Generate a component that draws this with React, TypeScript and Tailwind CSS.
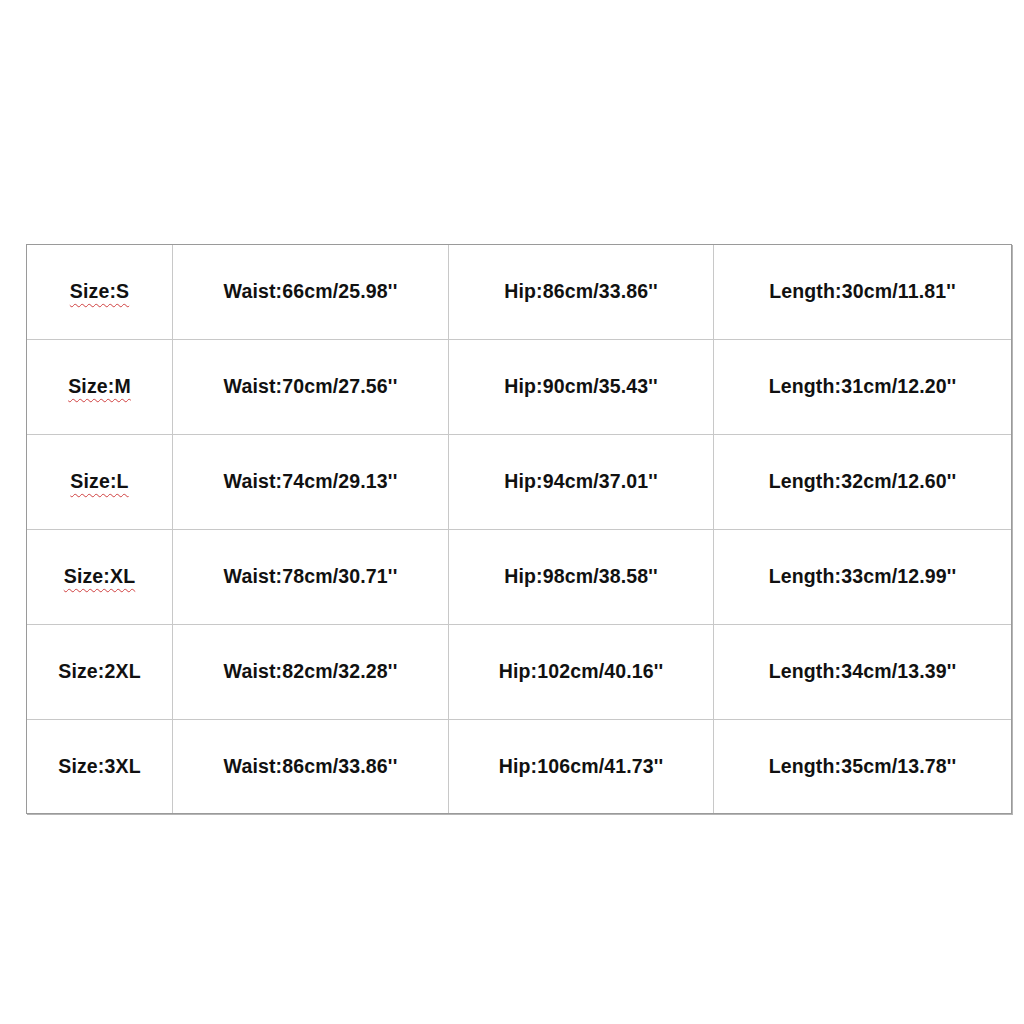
import React from "react";

const rows: [string, string, string, string, boolean][] = [
  ["Size:S", "Waist:66cm/25.98''", "Hip:86cm/33.86''", "Length:30cm/11.81''", true],
  ["Size:M", "Waist:70cm/27.56''", "Hip:90cm/35.43''", "Length:31cm/12.20''", true],
  ["Size:L", "Waist:74cm/29.13''", "Hip:94cm/37.01''", "Length:32cm/12.60''", true],
  ["Size:XL", "Waist:78cm/30.71''", "Hip:98cm/38.58''", "Length:33cm/12.99''", true],
  ["Size:2XL", "Waist:82cm/32.28''", "Hip:102cm/40.16''", "Length:34cm/13.39''", false],
  ["Size:3XL", "Waist:86cm/33.86''", "Hip:106cm/41.73''", "Length:35cm/13.78''", false],
];

export default function App() {
  return (
    <div className="w-[1024px] h-[1024px] bg-white pt-[244px] pl-[26px] font-['Liberation_Sans',Arial,sans-serif] text-[#111]">
      <div className="w-[986px] border border-[#9a9a9a] shadow-[1px_1px_0_#b5b5b5]">
        <div className="grid grid-cols-[146px_276px_265px_297px]">
          {rows.map((r, i) => {
            const last = i === rows.length - 1;
            const rb = last ? "h-[93px]" : "h-[95px] border-b border-[#c8c8c8]";
            return (
              <React.Fragment key={i}>
                <div className={`${rb} border-r border-[#c8c8c8] flex items-center justify-center`}>
                  <span
                    className={`text-[19.5px] font-bold tracking-[0.15px] ${
                      r[4]
                        ? "underline decoration-wavy decoration-[#d04040] decoration-1 underline-offset-[5px]"
                        : ""
                    }`}
                  >
                    {r[0]}
                  </span>
                </div>
                <div className={`${rb} border-r border-[#c8c8c8] flex items-center justify-center`}>
                  <span className="text-[19.5px] font-bold tracking-[0.15px]">{r[1]}</span>
                </div>
                <div className={`${rb} border-r border-[#c8c8c8] flex items-center justify-center`}>
                  <span className="text-[19.5px] font-bold tracking-[0.15px]">{r[2]}</span>
                </div>
                <div className={`${rb} flex items-center justify-center`}>
                  <span className="text-[19.5px] font-bold tracking-[0.15px]">{r[3]}</span>
                </div>
              </React.Fragment>
            );
          })}
        </div>
      </div>
    </div>
  );
}
